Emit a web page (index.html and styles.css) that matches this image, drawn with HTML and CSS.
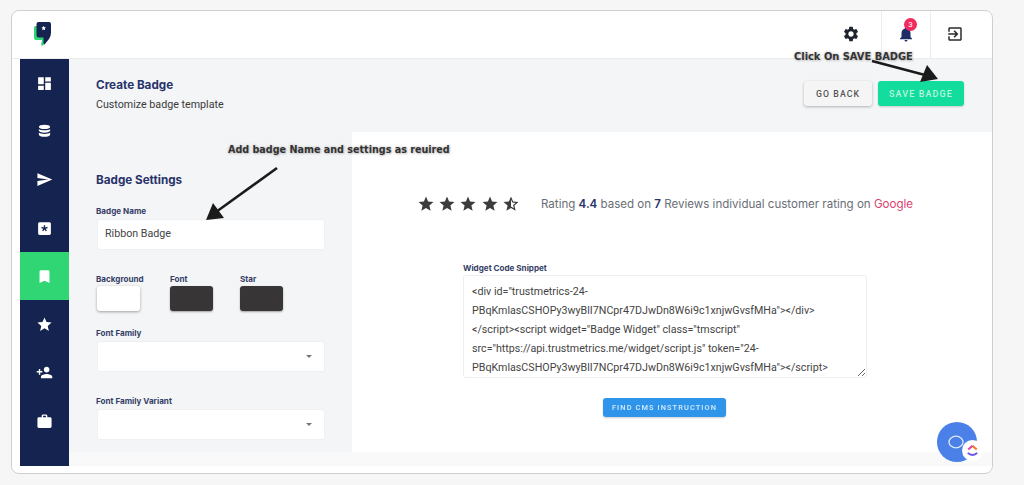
FILE: index.html
```html
<!DOCTYPE html>
<html lang="en">
<head>
<meta charset="utf-8">
<title>Create Badge</title>
<link rel="stylesheet" href="styles.css">
</head>
<body>
<div class="card">
  <header class="topbar">
    <svg class="logo" viewBox="0 0 18 24" width="18" height="24">
      <path fill="#2fd573" d="M0 5.500Q0 4 1.500 4H4V14H11V20L9 23.500H7L8 18H2Q0 18 0 16z"/>
      <path fill="#14234f" d="M2.500 2Q2.500 0 4.500 0H15Q17 0 17 2V11Q17 14 15 17L10.500 22.500Q9.500 23 9.500 21V15.500H4.500Q2.500 15.500 2.500 13.500z"/>
      <path fill="#fff" d="M9.700 3.800l.7 1.500 1.600.2-1.200 1.100.3 1.600-1.400-.8-1.400.8.300-1.600-1.200-1.100 1.600-.2z"/>
    </svg>
    <div class="spacer"></div>
    <div class="top-cell gear-cell">
      <svg class="top-icon" viewBox="0 0 24 24"><path fill="#1f2430" d="M19.140 12.940c.04-.3.06-.61.06-.94 0-.32-.02-.64-.07-.94l2.030-1.580c.18-.14.23-.41.12-.61l-1.920-3.320c-.12-.22-.37-.29-.59-.22l-2.390.96c-.5-.38-1.030-.7-1.620-.94l-.36-2.540c-.04-.24-.24-.41-.48-.41h-3.840c-.24 0-.43.17-.47.41l-.36 2.540c-.59.24-1.130.57-1.620.94l-2.390-.96c-.22-.08-.47 0-.59.22L2.740 8.870c-.12.21-.08.47.12.61l2.030 1.580c-.05.3-.09.63-.09.94s.02.64.07.94l-2.030 1.580c-.18.14-.23.41-.12.61l1.920 3.320c.12.22.37.29.59.22l2.390-.96c.5.38 1.030.7 1.620.94l.36 2.540c.05.24.24.41.48.41h3.840c.24 0 .44-.17.47-.41l.36-2.540c.59-.24 1.130-.56 1.620-.94l2.390.96c.22.08.47 0 .59-.22l1.920-3.320c.12-.22.07-.47-.12-.61l-2.010-1.580zM12 15.600c-1.980 0-3.600-1.620-3.600-3.600s1.620-3.600 3.600-3.600 3.600 1.620 3.600 3.600-1.620 3.600-3.600 3.600z"/></svg>
    </div>
    <div class="top-cell bordered">
      <span class="bell-wrap">
        <svg class="top-icon" viewBox="0 0 24 24"><path fill="#1d2c66" d="M12 22c1.100 0 2-.9 2-2h-4c0 1.100.89 2 2 2zm6-6v-5c0-3.070-1.640-5.640-4.500-6.320V4c0-.83-.67-1.500-1.500-1.500s-1.500.67-1.500 1.500v.68C7.630 5.360 6 7.920 6 11v5l-2 2v1h16v-1l-2-2z"/></svg>
        <span class="badge-count">3</span>
      </span>
    </div>
    <div class="top-cell bordered last">
      <svg class="top-icon" viewBox="0 0 24 24"><path fill="#2b2b2b" d="M10.090 15.590L11.500 17l5-5-5-5-1.410 1.410L12.670 11H3v2h9.670l-2.580 2.590zM19 3H5c-1.110 0-2 .9-2 2v4h2V5h14v14H5v-4H3v4c0 1.100.89 2 2 2h14c1.100 0 2-.9 2-2V5c0-1.100-.9-2-2-2z"/></svg>
    </div>
  </header>

  <div class="shell">
    <nav class="sidebar">
      <a class="nav-item"><svg viewBox="0 0 24 24"><path d="M3 13h8V3H3v10zm0 8h8v-6H3v6zm10 0h8V11h-8v10zm0-18v6h8V3h-8z"/></svg></a>
      <a class="nav-item"><svg viewBox="0 0 24 24"><path d="M12 2.500c-4.400 0-8 1.300-8 3s3.600 3 8 3 8-1.300 8-3-3.600-3-8-3zM4 8.300v2.400c0 1.700 3.600 3 8 3s8-1.300 8-3V8.300c-1.500 1.400-4.600 2-8 2s-6.500-.6-8-2zm0 5.200v2.700c0 2 3.600 3.300 8 3.300s8-1.300 8-3.300v-2.700c-1.500 1.400-4.600 2-8 2s-6.500-.6-8-2z"/></svg></a>
      <a class="nav-item"><svg viewBox="0 0 24 24"><path d="M2.010 21L23 12 2.010 3 2 10l15 2-15 2z"/></svg></a>
      <a class="nav-item"><svg viewBox="0 0 24 24"><path fill-rule="evenodd" d="M5 3h14c1.100 0 2 .9 2 2v14c0 1.100-.9 2-2 2H5c-1.100 0-2-.9-2-2V5c0-1.100.9-2 2-2zm6 4.500v3.100l-2.900-.9-.6 1.800 2.900.9-1.800 2.500 1.500 1.100 1.900-2.500 1.900 2.500 1.500-1.100-1.800-2.500 2.900-.9-.6-1.800-2.900.9V7.500z"/></svg></a>
      <a class="nav-item active"><svg viewBox="0 0 24 24"><path d="M17 3H7c-1.100 0-1.990.9-1.990 2L5 21l7-3 7 3V5c0-1.100-.9-2-2-2z"/></svg></a>
      <a class="nav-item"><svg viewBox="0 0 24 24"><path d="M12 17.270L18.180 21l-1.640-7.030L22 9.240l-7.190-.61L12 2 9.190 8.630 2 9.240l5.460 4.730L5.820 21z"/></svg></a>
      <a class="nav-item"><svg viewBox="0 0 24 24"><path d="M15 12c2.210 0 4-1.790 4-4s-1.790-4-4-4-4 1.790-4 4 1.790 4 4 4zm-9-2V7H4v3H1v2h3v3h2v-3h3v-2H6zm9 4c-2.670 0-8 1.340-8 4v2h16v-2c0-2.660-5.330-4-8-4z"/></svg></a>
      <a class="nav-item"><svg viewBox="0 0 24 24"><path d="M20 6h-4V4c0-1.110-.89-2-2-2h-4c-1.110 0-2 .89-2 2v2H4c-1.110 0-1.990.89-1.990 2L2 19c0 1.110.89 2 2 2h16c1.110 0 2-.89 2-2V8c0-1.110-.89-2-2-2zm-6 0h-4V4h4v2z"/></svg></a>
    </nav>

    <main class="main">
      <section class="page-head">
        <div class="page-titles">
          <h1 class="page-title">Create Badge</h1>
          <p class="page-sub">Customize badge template</p>
        </div>
        <div class="page-actions">
          <button class="btn btn-light">GO BACK</button>
          <button class="btn btn-save">SAVE BADGE</button>
        </div>
      </section>

      <div class="content">
        <section class="settings">
          <h2 class="settings-title">Badge Settings</h2>
          <label class="field-label">Badge Name</label>
          <div class="input">Ribbon Badge</div>
          <div class="colors">
            <div class="color-col col-bg"><span class="field-label">Background</span><span class="swatch swatch-white"></span></div>
            <div class="color-col col-font"><span class="field-label">Font</span><span class="swatch swatch-dark"></span></div>
            <div class="color-col"><span class="field-label">Star</span><span class="swatch swatch-dark"></span></div>
          </div>
          <label class="field-label family-label">Font Family</label>
          <div class="input select"><span class="caret"></span></div>
          <label class="field-label variant-label">Font Family Variant</label>
          <div class="input select"><span class="caret"></span></div>
        </section>

        <section class="preview">
          <div class="rating">
            <div class="stars">
              <svg viewBox="0 0 24 24"><path d="M12 17.270L18.180 21l-1.640-7.030L22 9.240l-7.190-.61L12 2 9.190 8.630 2 9.240l5.460 4.730L5.820 21z"/></svg>
              <svg viewBox="0 0 24 24"><path d="M12 17.270L18.180 21l-1.640-7.030L22 9.240l-7.190-.61L12 2 9.190 8.630 2 9.240l5.460 4.730L5.820 21z"/></svg>
              <svg viewBox="0 0 24 24"><path d="M12 17.270L18.180 21l-1.640-7.030L22 9.240l-7.190-.61L12 2 9.190 8.630 2 9.240l5.460 4.730L5.820 21z"/></svg>
              <svg viewBox="0 0 24 24"><path d="M12 17.270L18.180 21l-1.640-7.030L22 9.240l-7.190-.61L12 2 9.190 8.630 2 9.240l5.460 4.730L5.820 21z"/></svg>
              <svg viewBox="0 0 24 24"><path d="M22 9.240l-7.190-.62L12 2 9.190 8.630 2 9.240l5.460 4.730L5.820 21 12 17.270 18.180 21l-1.630-7.030L22 9.240zM12 15.400V6.100l1.710 4.040 4.380.38-3.320 2.880 1 4.280L12 15.400z"/></svg>
            </div>
            <p class="rating-text">Rating <b>4.4</b> based on <b>7</b> Reviews individual customer rating on <span class="google">Google</span></p>
          </div>
          <div class="snippet">
            <label class="field-label">Widget Code Snippet</label>
            <textarea class="code" wrap="off" readonly>&lt;div id="trustmetrics-24-
PBqKmlasCSHOPy3wyBlI7NCpr47DJwDn8W6i9c1xnjwGvsfMHa"&gt;&lt;/div&gt;
&lt;/script&gt;&lt;script widget="Badge Widget" class="tmscript"
src="https://api.trustmetrics.me/widget/script.js" token="24-
PBqKmlasCSHOPy3wyBlI7NCpr47DJwDn8W6i9c1xnjwGvsfMHa"&gt;&lt;/script&gt;</textarea>
            <div class="snippet-action"><button class="btn btn-blue">FIND CMS INSTRUCTION</button></div>
          </div>
        </section>
      </div>
      <div class="foot-strip"></div>
    </main>
  </div>
</div>

<div class="note note-save">Click On SAVE BADGE</div>
<div class="note note-name">Add badge Name and settings as reuired</div>
<svg class="arrows" viewBox="0 0 1024 485" width="1024" height="485">
  <path d="M277 168L216 212" stroke="#1b1b1b" stroke-width="2.500" fill="none"/>
  <path d="M206 220L213 203 224 218z" fill="#1b1b1b"/>
  <path d="M872 61L925 75" stroke="#1b1b1b" stroke-width="2.500" fill="none"/>
  <path d="M938 79L927 65 920 82z" fill="#1b1b1b"/>
</svg>

<div class="chat">
  <svg viewBox="0 0 44 44" width="44" height="44">
    <ellipse cx="21" cy="22" rx="7" ry="5.800" fill="none" stroke="#dfe8fb" stroke-width="1.300"/>
  </svg>
  <span class="chat-badge">
    <svg viewBox="0 0 16 16" width="15" height="15">
      <path d="M8 3l4.500 4" fill="none" stroke="#f0792b" stroke-width="2.200"/>
      <path d="M3.500 7L8 3" fill="none" stroke="#e83ea0" stroke-width="2.200"/>
      <path d="M3 10.500c2.800 3 7.200 3 10 0" fill="none" stroke="#6a55e8" stroke-width="2.200"/>
    </svg>
  </span>
</div>
</body>
</html>
```

FILE: styles.css
```css
* { box-sizing: border-box; }
html, body { margin: 0; height: 100%; }
body {
  background: #f6f6f6;
  padding: 10px 31px 0 11px;
  font-family: "Roboto", "Liberation Sans", sans-serif;
  color: #333;
  overflow: hidden;
  position: relative;
  filter: blur(.35px);
}
.card {
  width: 982px;
  height: 464px;
  background: #fff;
  border: 1px solid #cfcfcf;
  border-radius: 8px;
  overflow: hidden;
  display: flex;
  flex-direction: column;
}
.topbar {
  height: 48px;
  flex: none;
  display: flex;
  align-items: stretch;
  border-bottom: 1px solid #ececec;
}
.logo { margin: 11px 0 0 22px; flex: none; }
.spacer { flex: 1; }
.top-cell {
  width: 49px;
  display: flex;
  align-items: center;
  justify-content: center;
  padding-bottom: 1px;
}
.gear-cell { padding-right: 11px; }
.top-cell.bordered { border-left: 1px solid #ececec; }
.top-cell.last { margin-right: 13px; }
.top-icon { width: 18px; height: 18px; display: block; }
.bell-wrap { position: relative; display: block; }
.badge-count {
  position: absolute;
  left: 7px;
  top: -7px;
  width: 13px;
  height: 13px;
  border-radius: 50%;
  background: #f0295f;
  color: #fff;
  font-size: 8px;
  line-height: 13px;
  text-align: center;
}
.shell { flex: 1; display: flex; padding: 0 0 7px 8px; min-height: 0; }
.sidebar {
  width: 49px;
  flex: none;
  background: #14234f;
  display: flex;
  flex-direction: column;
}
.nav-item {
  height: 48.300px;
  flex: none;
  display: flex;
  align-items: center;
  justify-content: center;
}
.nav-item svg { width: 17px; height: 17px; fill: #fff; display: block; }
.nav-item.active { background: #30d673; }
.main { flex: 1; display: flex; flex-direction: column; min-width: 0; }
.page-head {
  height: 73px;
  flex: none;
  background: #f4f5f7;
  display: flex;
  justify-content: space-between;
  padding: 19px 28px 0 27px;
}
.page-title {
  margin: 0;
  font-family: "Inter", sans-serif;
  font-size: 11.700px;
  line-height: 15px;
  font-weight: 700;
  color: #28336a;
}
.page-sub {
  margin: 5px 0 0;
  font-size: 10.700px;
  line-height: 14px;
  color: #3a3a3a;
}
.page-actions { display: flex; gap: 6px; padding-top: 3px; align-items: flex-start; }
.btn {
  border: 0;
  border-radius: 3px;
  font-family: "Roboto", sans-serif;
  font-weight: 500;
  letter-spacing: 1.100px;
  cursor: pointer;
  padding: 0;
}
.btn-light {
  width: 68px;
  height: 25px;
  background: #f5f5f5;
  color: #555;
  font-size: 8.700px;
  box-shadow: 0 1px 3px rgba(0,0,0,.28);
}
.btn-save {
  width: 86px;
  height: 25px;
  background: #12dd9c;
  color: #b9f5de;
  font-size: 9px;
  box-shadow: 0 1px 2px rgba(0,0,0,.18);
}
.content { flex: 1; display: flex; min-height: 0; }
.settings {
  width: 283px;
  flex: none;
  background: #f4f5f7;
  padding: 41px 27px 0 27px;
  display: flex;
  flex-direction: column;
}
.settings-title {
  margin: 0 0 18px;
  font-family: "Inter", sans-serif;
  font-size: 11.700px;
  line-height: 15px;
  font-weight: 700;
  color: #28336a;
}
.field-label {
  display: block;
  font-family: "Inter", "Roboto", sans-serif;
  font-size: 8.100px;
  line-height: 10px;
  font-weight: 700;
  color: #363e66;
}
.input {
  margin: 3px 0 0 1px;
  height: 31px;
  width: 228px;
  background: #fff;
  border-radius: 3px;
  border: 1px solid #eef0f2;
  font-size: 10.700px;
  line-height: 28px;
  color: #444;
  padding-left: 7px;
}
.colors { display: flex; margin-top: 24px; }
.color-col { display: flex; flex-direction: column; gap: 2px; }
.col-bg { width: 74px; }
.col-font { width: 70px; }
.swatch { display: block; width: 43px; height: 25px; border-radius: 3px; }
.swatch-white { background: #fff; margin-left: 1px; box-shadow: 0 1px 3px rgba(0,0,0,.35); }
.swatch-dark { background: #373535; box-shadow: 0 1px 2px rgba(0,0,0,.35); }
.family-label { margin-top: 17px; }
.variant-label { margin-top: 24px; }
.select { display: flex; align-items: center; justify-content: flex-end; padding-right: 12px; }
.caret {
  width: 0; height: 0;
  border-left: 3.500px solid transparent;
  border-right: 3.500px solid transparent;
  border-top: 3.500px solid #777;
}
.preview {
  flex: 1;
  background: #fff;
  display: flex;
  flex-direction: column;
  min-width: 0;
}
.rating {
  display: flex;
  align-items: center;
  padding: 60px 0 0 65px;
  height: 84px;
}
.stars { display: flex; gap: 3.200px; width: 124px; flex: none; }
.stars svg { width: 18px; height: 18px; fill: #3c3c3c; flex: none; }
.rating-text {
  margin: 0;
  font-family: "Inter", sans-serif;
  font-size: 11.560px;
  line-height: 16px;
  color: #6a6e76;
  white-space: nowrap;
}
.rating-text b { font-weight: 600; color: #28336a; }
.google { color: #d8436f; }
.snippet { margin: 47px 0 0 111px; width: 404px; }
.code {
  display: block;
  margin-top: 2px;
  width: 404px;
  height: 103px;
  border: 1px solid #eceef0;
  border-radius: 3px;
  padding: 6px 8px;
  font-family: "Roboto", sans-serif;
  font-size: 10.700px;
  line-height: 19px;
  color: #444;
  background: #fff;
  overflow: hidden;
  resize: both;
  outline: none;
}
.snippet-action { display: flex; justify-content: center; margin-top: 20px; padding-right: 1px; }
.btn-blue {
  width: 123px;
  height: 19px;
  background: #2e95ea;
  color: #d6ecfd;
  font-size: 7.400px;
  box-shadow: 0 1px 2px rgba(0,0,0,.2);
}
.foot-strip { height: 14px; flex: none; background: #f9f9fa; }
.note {
  position: absolute;
  font-family: "DejaVu Sans", sans-serif;
  font-weight: 700;
  line-height: 12px;
  color: #333;
  white-space: nowrap;
  text-shadow: 0 0 3px #bbb, 1px 1px 2px #ccc;
}
.note-save { left: 794px; top: 51px; font-size: 9.900px; }
.note-name { left: 228px; top: 144px; font-size: 9.600px; }
.arrows { position: absolute; left: 0; top: 0; pointer-events: none; }
.chat {
  position: absolute;
  left: 937px;
  top: 422px;
  width: 40px;
  height: 40px;
  border-radius: 50%;
  background: #4a80e8;
}
.chat svg { display: block; }
.chat > svg { margin: -2px 0 0 -2px; }
.chat-badge {
  position: absolute;
  left: 25px;
  top: 18px;
  width: 21px;
  height: 21px;
  border-radius: 50%;
  background: #fff;
  display: flex;
  align-items: center;
  justify-content: center;
}
```
